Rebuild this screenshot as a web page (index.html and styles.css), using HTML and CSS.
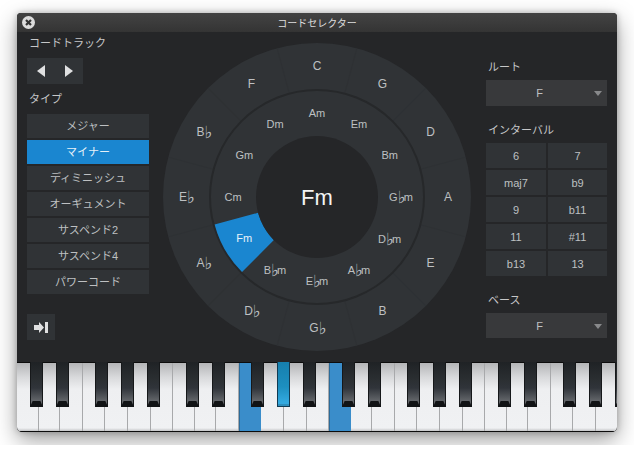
FILE: index.html
```html
<!DOCTYPE html>
<html lang="ja">
<head>
    <meta charset="UTF-8">
    <meta name="viewport" content="width=device-width, initial-scale=1.0">
    <title>コードセレクター</title>
    <link rel="stylesheet" href="styles.css">
</head>
<body>
    <div class="window">
        <header class="titlebar">
            <svg class="close" width="13" height="13" viewBox="0 0 13 13">
                <circle cx="6.500" cy="6.500" r="6.500" fill="#dcdcdc"/>
                <path d="M4 4l5 5M9 4l-5 5" stroke="#333" stroke-width="2.200"/>
            </svg>
            <span class="title">コードセレクター</span>
        </header>

        <main class="panel">
            <section class="col-left">
                <p class="label label-track">コードトラック</p>
                <div class="nav">
                    <svg width="8" height="12" viewBox="0 0 8 12"><path d="M8 0v12L0 6z"/></svg>
                    <svg width="8" height="12" viewBox="0 0 8 12"><path d="M0 0v12l8-6z"/></svg>
                </div>
                <p class="label label-type">タイプ</p>
                <div class="types">
                    <button class="btn">メジャー</button>
                    <button class="btn on">マイナー</button>
                    <button class="btn">ディミニッシュ</button>
                    <button class="btn">オーギュメント</button>
                    <button class="btn">サスペンド2</button>
                    <button class="btn">サスペンド4</button>
                    <button class="btn">パワーコード</button>
                </div>
                <div class="tool">
                    <svg width="14" height="11" viewBox="0 0 14 11"><path d="M0 3h5V0l5 5.500-5 5.500V8H0zM11 0h3v11h-3z"/></svg>
                </div>
            </section>

            <svg class="wheel" width="308" height="308" viewBox="0 0 308 308">
                <circle cx="154" cy="154" r="154" fill="#303336"/>
                <g class="spokes">
                    <line x1="154" y1="0" x2="154" y2="308" transform="rotate(15 154 154)"/>
                    <line x1="154" y1="0" x2="154" y2="308" transform="rotate(45 154 154)"/>
                    <line x1="154" y1="0" x2="154" y2="308" transform="rotate(75 154 154)"/>
                    <line x1="154" y1="0" x2="154" y2="308" transform="rotate(105 154 154)"/>
                    <line x1="154" y1="0" x2="154" y2="308" transform="rotate(135 154 154)"/>
                    <line x1="154" y1="0" x2="154" y2="308" transform="rotate(165 154 154)"/>
                </g>
                <circle cx="154" cy="154" r="107" fill="#303336" stroke="#26282a" stroke-width="2"/>
                <path d="M51.6 181.400A106 106 0 0 0 79 229L110.900 197.100A61 61 0 0 1 95.100 169.800Z" fill="#1a86d0"/>
                <circle cx="154" cy="154" r="61" fill="#252628"/>

                <g class="major">
                    <text x="154" y="23">C</text>
                    <text x="219.500" y="40.500">G</text>
                    <text x="267.500" y="88.500">D</text>
                    <text x="285" y="154">A</text>
                    <text x="267.500" y="219.500">E</text>
                    <text x="219.500" y="267.500">B</text>
                    <text x="154" y="285">G<tspan class="flat">♭</tspan></text>
                    <text x="88.500" y="267.500">D<tspan class="flat">♭</tspan></text>
                    <text x="40.500" y="219.500">A<tspan class="flat">♭</tspan></text>
                    <text x="23" y="154">E<tspan class="flat">♭</tspan></text>
                    <text x="40.500" y="88.500">B<tspan class="flat">♭</tspan></text>
                    <text x="88.500" y="40.500">F</text>
                </g>
                <g class="minor">
                    <text x="154" y="70">Am</text>
                    <text x="196" y="81.300">Em</text>
                    <text x="226.700" y="112">Bm</text>
                    <text x="238" y="154">G<tspan class="flat">♭</tspan>m</text>
                    <text x="226.700" y="196">D<tspan class="flat">♭</tspan>m</text>
                    <text x="196" y="226.700">A<tspan class="flat">♭</tspan>m</text>
                    <text x="154" y="238">E<tspan class="flat">♭</tspan>m</text>
                    <text x="112" y="226.700">B<tspan class="flat">♭</tspan>m</text>
                    <text class="sel" x="81.300" y="195">Fm</text>
                    <text x="70" y="154">Cm</text>
                    <text x="81.300" y="112">Gm</text>
                    <text x="112" y="81.300">Dm</text>
                </g>
                <text class="current" x="154" y="154">Fm</text>
            </svg>

            <section class="col-right">
                <p class="label label-root">ルート</p>
                <div class="select">F<i class="caret"></i></div>
                <p class="label label-int">インターバル</p>
                <div class="intervals">
                    <button class="btn">6</button>
                    <button class="btn">7</button>
                    <button class="btn">maj7</button>
                    <button class="btn">b9</button>
                    <button class="btn">9</button>
                    <button class="btn">b11</button>
                    <button class="btn">11</button>
                    <button class="btn">#11</button>
                    <button class="btn">b13</button>
                    <button class="btn">13</button>
                </div>
                <p class="label label-bass">ベース</p>
                <div class="select">F<i class="caret"></i></div>
            </section>
        </main>

        <div class="keyboard">
            <div class="whites">
                <i class="w c"></i><i class="w d"></i><i class="w e"></i><i class="w f"></i><i class="w g"></i><i class="w a"></i><i class="w b"></i>
                <i class="w c"></i><i class="w d"></i><i class="w e"></i><i class="w f hit"></i><i class="w g"></i><i class="w a"></i><i class="w b"></i>
                <i class="w c hit"></i><i class="w d"></i><i class="w e"></i><i class="w f"></i><i class="w g"></i><i class="w a"></i><i class="w b"></i>
                <i class="w c"></i><i class="w d"></i><i class="w e"></i><i class="w f"></i><i class="w g"></i><i class="w a"></i>
            </div>
            <div class="blacks">
                <i class="k"></i><i class="k"></i>
                <i class="k far"></i><i class="k"></i><i class="k"></i>
                <i class="k far"></i><i class="k"></i>
                <i class="k far"></i><i class="k hit"></i><i class="k"></i>
                <i class="k far"></i><i class="k"></i>
                <i class="k far"></i><i class="k"></i><i class="k"></i>
                <i class="k far"></i><i class="k"></i>
                <i class="k far"></i><i class="k"></i><i class="k"></i>
            </div>
        </div>
    </div>
</body>
</html>
```

FILE: styles.css
```css
*{
    margin: 0;
    padding: 0;
    box-sizing: border-box;
}
body{
    background: #fff;
    padding: 13px 17px;
    font-family: "Liberation Sans", "Noto Sans CJK JP", sans-serif;
    font-size: 11px;
}
.window{
    width: 600px;
    height: 419px;
    border-radius: 4px 4px 5px 5px;
    overflow: hidden;
    background: #252628;
    display: flex;
    flex-direction: column;
    box-shadow: 0 8px 22px rgba(0,0,0,.38), 0 0 6px rgba(0,0,0,.25);
}

.titlebar{
    height: 19px;
    flex: none;
    position: relative;
    display: flex;
    align-items: center;
    justify-content: center;
    background: linear-gradient(#434343, #343434);
}
.close{
    position: absolute;
    left: 5px;
    top: 3px;
}
.title{
    color: #dedede;
    font-size: 10px;
}

.panel{
    height: 330px;
    flex: none;
    display: flex;
    padding: 3px 10px 0;
}
.col-left{
    width: 122px;
    flex: none;
    margin-right: 14px;
}
.col-right{
    width: 121px;
    flex: none;
    margin-left: 15px;
}
.wheel{
    flex: none;
    margin-top: 8px;
}

.label{
    color: #c6c7c8;
    font-size: 11px;
    line-height: 16px;
    padding-left: 2px;
    height: 16px;
}
.label-track{
    margin-bottom: 7px;
}
.label-type{
    margin-top: 7px;
    margin-bottom: 7px;
}
.label-root{
    margin-top: 24px;
    margin-bottom: 5px;
}
.label-int,
.label-bass{
    margin-top: 16px;
    margin-bottom: 5px;
}

.nav{
    width: 56px;
    height: 26px;
    background: #303336;
    display: flex;
    align-items: center;
    justify-content: space-between;
    padding: 0 10px;
}
.nav svg,
.tool svg{
    fill: #dfe0e1;
}
.tool{
    width: 28px;
    height: 26px;
    margin-top: 20px;
    background: #303336;
    display: flex;
    align-items: center;
    justify-content: center;
}

.btn{
    border: 0;
    background: #303336;
    color: #bec0c2;
    font-family: inherit;
    font-size: 11px;
}
.btn.on{
    background: #1a86d0;
    color: #e6f1f8;
}
.types{
    display: flex;
    flex-direction: column;
    gap: 2px;
}
.types .btn{
    height: 24px;
    padding-bottom: 3px;
}
.intervals{
    display: grid;
    grid-template-columns: 60px 59px;
    grid-auto-rows: 25px;
    gap: 2px;
}

.select{
    height: 26px;
    position: relative;
    background: #38393b;
    color: #bec0c2;
    display: flex;
    align-items: center;
    justify-content: center;
    padding-right: 14px;
}
.label-bass + .select{
    height: 25px;
}
.caret{
    position: absolute;
    right: 5px;
    top: 11px;
    border-left: 4px solid transparent;
    border-right: 4px solid transparent;
    border-top: 5px solid #88898b;
}

.spokes line{
    stroke: #2e3134;
    stroke-width: 1;
}
.wheel text{
    text-anchor: middle;
    dominant-baseline: central;
    font-family: "Liberation Sans", sans-serif;
    fill: #bec0c2;
}
/* the flat glyph is tiny in DejaVu, so it gets a bigger size and tighter spacing */
.wheel .flat{
    font-family: "DejaVu Sans", sans-serif;
    font-size: 17px;
    letter-spacing: -2px;
}
.major text{
    font-size: 12px;
}
.minor text{
    font-size: 11px;
}
.wheel .sel{
    fill: #e8f2f9;
}
.wheel .current{
    font-size: 22px;
    fill: #f4f4f4;
}

.keyboard{
    position: relative;
    height: 70px;
    flex: none;
    background: #0c0c0c;
    padding: 1px 0;
    overflow: hidden;
}
.whites{
    display: flex;
    height: 100%;
}
.w{
    display: block;
    flex: none;
    border-right: 1px solid #a8a9ab;
    background: linear-gradient(#b4b5b7 0, #d8d9db 14px, #eeeff1 26px, #f0f1f3 65px, #c4c5c7 68px);
}
.w.c{ width: 22px; }
.w.d{ width: 21px; }
.w.e{ width: 22.5px; }
.w.f{ width: 22px; }
.w.g{ width: 23px; }
.w.a{ width: 23.5px; }
.w.b{ width: 22px; }
.w.hit{
    background: #3a8dca;
    border-left: 1px solid #2c6b99;
    border-right: 0;
}
.blacks{
    position: absolute;
    left: 13px;
    top: 0;
    display: flex;
}
.k{
    display: block;
    flex: none;
    position: relative;
    width: 13px;
    height: 45px;
    margin-right: 13px;
    background: linear-gradient(#1f2225 0, #2b2f32 18px, #30343a 26px, #63666a 39px);
    border: 1px solid #16181a;
    border-top: 0;
}
.k.far{
    margin-left: 13px;
}
/* bevel at the front of the black key */
.k::after{
    content: "";
    position: absolute;
    left: -1px;
    right: -1px;
    bottom: -1px;
    height: 6px;
    background: #111315;
    clip-path: polygon(20% 0, 80% 0, 100% 100%, 0 100%);
}
.k.hit{
    background: linear-gradient(#167fae 0, #1d8fc0 25px, #33a9df 40px);
    border-color: #123a52;
}
.k.hit::after{
    left: 0;
    right: 0;
    bottom: 0;
    height: 2px;
    background: #2d8fbd;
    clip-path: none;
}
```
